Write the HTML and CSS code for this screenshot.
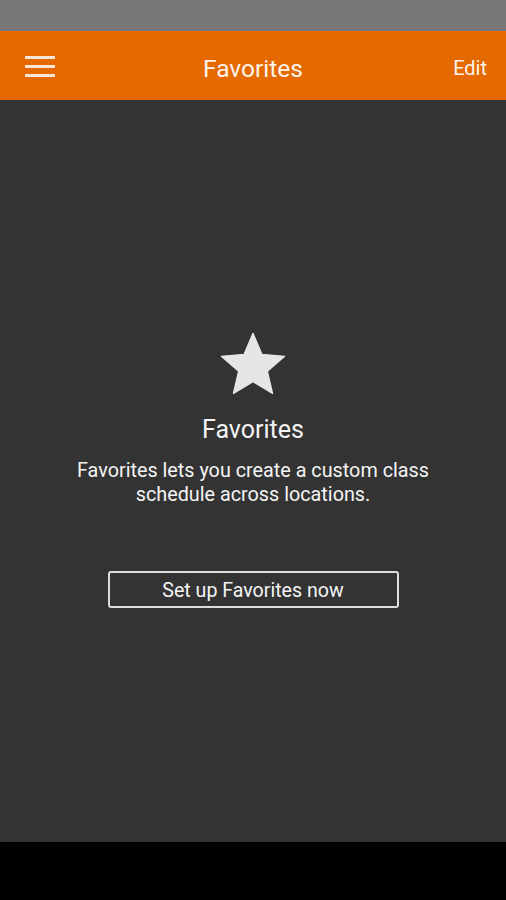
FILE: index.html
```html
<!DOCTYPE html>
<html lang="en">
<head>
  <meta charset="UTF-8">
  <meta name="viewport" content="width=device-width, initial-scale=1.0">
  <title>Favorites</title>
  <link rel="stylesheet" href="styles.css">
</head>
<body>
  <div class="status-bar"></div>

  <div class="toolbar">
    <div class="menu">
      <span></span>
      <span></span>
      <span></span>
    </div>
    <h1>Favorites</h1>
    <div class="edit">Edit</div>
  </div>

  <div class="content">
    <svg class="star" viewBox="0 0 24 24" width="76" height="76">
      <path d="M12 17.27L18.18 21l-1.64-7.03L22 9.24l-7.19-.61L12 2 9.19 8.63 2 9.24l5.46 4.73L5.82 21z" fill="#e6e6e6" stroke="#e6e6e6" stroke-width="0.4" stroke-linejoin="round"/>
    </svg>
    <h2>Favorites</h2>
    <p>Favorites lets you create a custom class<br>schedule across locations.</p>
    <button>Set up Favorites now</button>
  </div>

  <div class="nav-bar"></div>
</body>
</html>
```

FILE: styles.css
```css
body {
  margin: 0;
  font-family: Roboto, "Noto Sans", sans-serif;
  background: #000;
  color: #f4f4f4;
}
.status-bar {
  height: 31px;
  background: #787878;
}
.toolbar {
  height: 69px;
  background: #e46900;
  display: grid;
  grid-template-columns: 1fr auto 1fr;
  align-items: center;
  padding: 0 19px;
  color: #fdf3ea;
}
.menu {
  display: flex;
  flex-direction: column;
  gap: 6px;
  width: 30px;
  margin-left: 6px;
  padding-top: 2px;
}
.menu span {
  display: block;
  height: 3px;
  background: #fbe6d4;
}
.toolbar h1 {
  margin: 0;
  padding-top: 6px;
  font-size: 24.5px;
  font-weight: 400;
}
.edit {
  justify-self: end;
  padding-top: 4px;
  font-size: 20px;
}
.content {
  height: 742px;
  box-sizing: border-box;
  background: #333;
  display: flex;
  flex-direction: column;
  align-items: center;
  padding-top: 227px;
  text-align: center;
}
.star {
  display: block;
}
.content h2 {
  margin: 13px 0 0;
  font-size: 25px;
  font-weight: 400;
  line-height: 28px;
}
.content p {
  margin: 15px 0 0;
  font-size: 19.8px;
  line-height: 24px;
}
button {
  margin-top: 64px;
  width: 291px;
  height: 37px;
  border: 2px solid #dcdcdc;
  border-radius: 3px;
  background: transparent;
  color: #f4f4f4;
  font-family: inherit;
  font-size: 19.6px;
  padding-top: 2px;
}
.nav-bar {
  height: 58px;
  background: #000;
}
```
